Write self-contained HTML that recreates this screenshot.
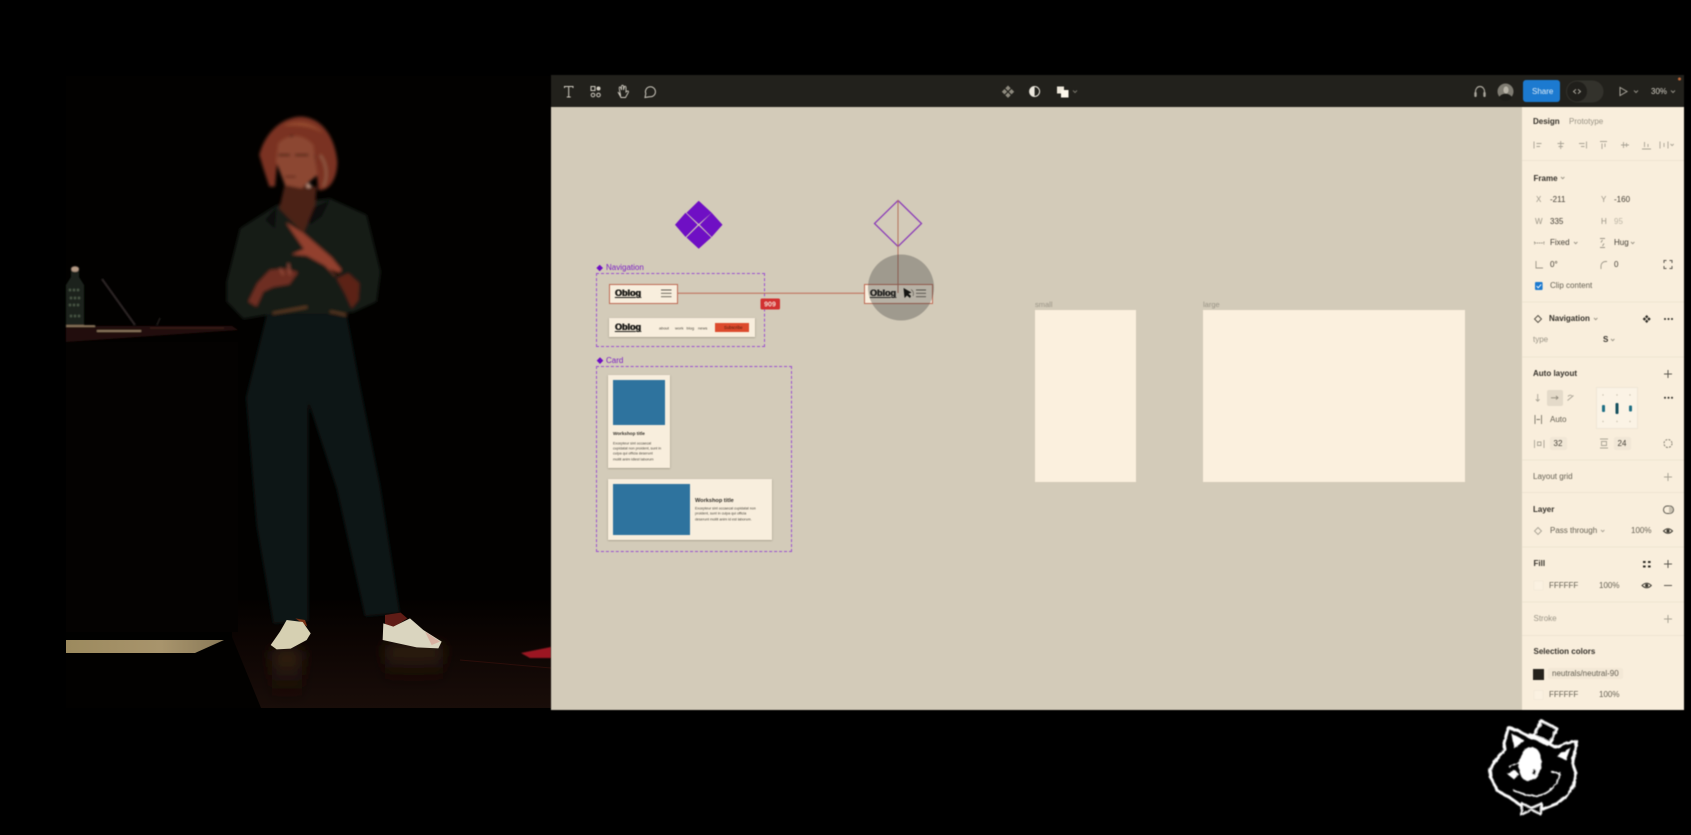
<!DOCTYPE html>
<html><head><meta charset="utf-8"><title>Figma talk</title>
<style>
html,body{margin:0;padding:0;background:#000;width:1691px;height:835px;overflow:hidden;font-family:"Liberation Sans",sans-serif}
.a{position:absolute}
.t{position:absolute;white-space:nowrap;transform:translateY(-50%);font-size:8px;line-height:10px;color:#443f36}
.b{font-weight:700;color:#35312a}
.d{color:#9a9486}
.m{color:#666154}
.o{font-weight:700;font-size:9px;color:#1b1a17;text-decoration:underline;text-shadow:.35px 0 0 #1b1a17,-.2px 0 0 #1b1a17}
.k{background:#f8eedd;position:absolute;box-shadow:0 .5px 1.5px rgba(60,50,30,.45)}
.i{background:#2e739e;position:absolute}
.l{font-size:3.6px;line-height:5px;color:#4a463c}
#w{position:absolute;left:0;top:0;width:1691px;height:835px;filter:blur(.65px)}
</style></head><body>
<!-- stage photo -->
<svg class="a" style="left:0;top:0" width="1691" height="835" viewBox="0 0 1691 835">
<defs>
<filter id="f1" filterUnits="userSpaceOnUse" x="0" y="0" width="1691" height="835"><feGaussianBlur stdDeviation="1.6"/></filter>
<filter id="f0" filterUnits="userSpaceOnUse" x="0" y="0" width="1691" height="835"><feGaussianBlur stdDeviation=".8"/></filter>
<filter id="f2" filterUnits="userSpaceOnUse" x="0" y="0" width="1691" height="835"><feGaussianBlur stdDeviation="7"/></filter>
<linearGradient id="fl" x1="0" y1="0" x2="0" y2="1"><stop offset="0" stop-color="#030100"/><stop offset=".4" stop-color="#0d0503"/><stop offset="1" stop-color="#190d09"/></linearGradient>
<linearGradient id="st" x1="0" y1="0" x2="1" y2="0"><stop offset="0" stop-color="#9c8a5e"/><stop offset=".6" stop-color="#a8946c"/><stop offset="1" stop-color="#8a7a58"/></linearGradient>
<linearGradient id="r1" x1="0" y1="0" x2="0" y2="1"><stop offset="0" stop-color="#3c2818"/><stop offset="1" stop-color="#170c08" stop-opacity="0"/></linearGradient>
</defs>
<rect x="66" y="76" width="485" height="632" fill="#020100"/>
<rect x="66" y="600" width="485" height="108" fill="url(#fl)"/>
<g filter="url(#f2)">
<rect x="272" y="650" width="30" height="54" fill="url(#r1)"/>
<rect x="385" y="645" width="58" height="40" fill="url(#r1)"/>
</g>
<path d="M460 660L551 668" stroke="#2c0e0a" stroke-width="1"/>
<g filter="url(#f0)"><path d="M521 653L551 647V658H530Z" fill="#9c1424"/></g>
<!-- table -->
<rect x="66" y="342" width="172" height="290" fill="#040201"/>
<g filter="url(#f0)">
<path d="M66 326H232L238 330 66 342Z" fill="#23100a"/>
<path d="M66 326H95M97 331H141" stroke="#a0886a" stroke-width="1.5"/>
<path d="M150 328H224" stroke="#3a1e14" stroke-width="1.2"/>
<path d="M71 270h8v7l5 8v40H66v-40l5-8z" fill="#1a241d"/>
<ellipse cx="75" cy="269" rx="4" ry="2.8" fill="#b59a84"/>
<path d="M69 290h12M70 298h11M69 305h12M70 316h11" stroke="#4d5a48" stroke-width="2.2" stroke-dasharray="2 2"/>
<path d="M102 279L135 325" stroke="#2e2628" stroke-width="2"/>
<path d="M157 325L160 318" stroke="#2a2422" stroke-width="1.2"/>
</g>
<path d="M66 632H230L261 708H66Z" fill="#020100"/>
<rect x="66" y="632" width="166" height="8" fill="#010100"/>
<path d="M66 640H224L195 653H66Z" fill="url(#st)"/>

<!-- person -->
<g filter="url(#f1)">
<g transform="translate(60,70) scale(.33333,.41459)">
<path d="M620 590H860L900 760 960 1000 1020 1310 915 1318 830 1010 745 800 745 1330 640 1335 590 1100 558 790Z" fill="#0d1412"/>
</g>
<g transform="translate(220,105) scale(.33333)">
<path d="M170 300L330 280 440 330 482 500 470 590 400 622 330 628 150 628 70 642 20 590 20 530 60 370Z" fill="#131b19"/>
<path d="M135 345L170 305 165 372ZM255 320L330 285 305 335 270 360Z" fill="#080d0c"/>
<path d="M195 235L290 245 285 300 250 385 178 310Z" fill="#4c2216"/>
<path d="M118 150C135 80 190 35 245 35 310 40 345 100 352 170 352 225 325 260 295 255L285 150 215 90 175 130 165 245 148 245 130 190Z" fill="#7a3320"/>
<path d="M190 62C230 42 280 50 310 85 270 60 230 62 190 62Z" fill="#94482f"/>
<path d="M300 150C320 175 325 215 310 245" stroke="#8e5640" stroke-width="8" fill="none"/>
<path d="M175 115C205 85 250 85 280 120L292 210 245 250 195 240 168 170Z" fill="#8c4733"/>
<path d="M175 150h35M225 150h40" stroke="#3e1a12" stroke-width="5"/>
<path d="M195 215h32" stroke="#4e1e15" stroke-width="4"/>
<circle cx="266" cy="242" r="6" fill="#d8a690"/>
<path d="M350 520L385 505 418 535 415 585 395 610 375 565Z" fill="#5c2418"/>
<path d="M198 352L250 384 335 458 365 495 345 515 315 482 260 452 215 448 252 432 222 388Z" fill="#92402f"/>
<path d="M328 492L368 505 350 518Z" fill="#23150d"/>
<path d="M85 590L112 535 150 495 200 490 234 502 208 538 160 546 130 560 110 605Z" fill="#6e2d22"/>
<path d="M180 490L190 510M205 475L210 510" stroke="#9a4e3e" stroke-width="5"/>
<path d="M158 625L262 606M330 620L380 630" stroke="#704428" stroke-width="5"/>
</g>
<g transform="translate(60,70) scale(.33333,.41459)">
<path d="M712 600V730" stroke="#33160f" stroke-width="3" stroke-dasharray="5 30"/>
</g>
</g>
<!-- shoes -->
<g filter="url(#f0)" transform="translate(60,590) scale(.33333)">
<path d="M975 75L1022 68 1042 85 1000 112 975 105Z" fill="#5e1c12"/>
<path d="M706 85L735 90 742 110Z" fill="#7a3214"/>
<path d="M680 90L728 96 752 130 740 150 692 176 650 178 632 165 660 125Z" fill="#d6d0b2"/>
<path d="M970 100L1000 110 1050 85 1090 120 1145 155 1135 175 1070 172 968 150Z" fill="#dad5bf"/>
<path d="M1095 125L1140 155 1115 165Z" fill="#d8b0a0"/>
</g>
</svg>

<div id="w">
<div class="a" style="left:551px;top:75px;width:1133px;height:32px;background:#22211c"></div>
<div class="a" style="left:551px;top:107px;width:971px;height:603px;background:#d3cbb9"></div>
<div class="a" style="left:1522px;top:107px;width:162px;height:603px;background:#f9eedc"></div>

<div class="a" style="left:1034.5px;top:310px;width:101px;height:172px;background:#fbf0de"></div>
<div class="a" style="left:1202.5px;top:310px;width:262px;height:172px;background:#fbf0de"></div>
<div class="t d" style="left:1035px;top:305px;font-size:7.5px">small</div>
<div class="t d" style="left:1203px;top:305px;font-size:7.5px">large</div>

<div class="a" style="left:595.5px;top:273px;width:169px;height:74px;border:1px dashed #9a50cf;box-sizing:border-box"></div>
<div class="a" style="left:595.5px;top:366px;width:196.5px;height:186px;border:1px dashed #9a50cf;box-sizing:border-box"></div>
<div class="t" style="left:606px;top:268px;color:#7a1fc4;font-size:8px">Navigation</div>
<div class="t" style="left:606px;top:360.5px;color:#7a1fc4;font-size:8px">Card</div>

<div class="k" style="left:608.5px;top:283.5px;width:69px;height:20px;box-shadow:none;border:1px solid #bd6a55;box-sizing:border-box"></div>
<div class="k" style="left:609px;top:318px;width:146px;height:19px"></div>
<div class="k" style="left:863.5px;top:283.5px;width:69px;height:20px;box-shadow:none;border:1px solid #bd6a55;box-sizing:border-box"></div>
<div class="t o" style="left:615px;top:293px">Oblog</div>
<div class="t o" style="left:615px;top:327px">Oblog</div>
<div class="t o" style="left:870px;top:293px">Oblog</div>
<div class="t l" style="left:659px;top:327.5px;font-size:4px">about</div>
<div class="t l" style="left:675px;top:327.5px;font-size:4px">work</div>
<div class="t l" style="left:686.5px;top:327.5px;font-size:4px">blog</div>
<div class="t l" style="left:698px;top:327.5px;font-size:4px">news</div>
<div class="a" style="left:714.5px;top:322.7px;width:34.5px;height:9.5px;background:#dc4a2c"></div>
<div class="t" style="left:724px;top:327.5px;font-size:4.2px;color:#4d1a0c">Subscribe</div>

<div class="k" style="left:608px;top:375px;width:62px;height:93px"></div>
<div class="i" style="left:613px;top:380px;width:52px;height:45px"></div>
<div class="t b" style="left:613px;top:433.5px;font-size:4.6px">Workshop title</div>
<div class="t l" style="left:613px;top:443.5px">Excepteur sint occaecat</div>
<div class="t l" style="left:613px;top:449px">cupidatat non proident, sunt in</div>
<div class="t l" style="left:613px;top:454px">culpa qui officia deserunt</div>
<div class="t l" style="left:613px;top:459.5px">mollit anim idlest laborum</div>
<div class="k" style="left:608px;top:479px;width:164px;height:61px"></div>
<div class="i" style="left:613px;top:484px;width:77px;height:51px"></div>
<div class="t b" style="left:695px;top:500.5px;font-size:5.6px">Workshop title</div>
<div class="t l" style="left:695px;top:509px">Excepteur sint occaecat cupidatat non</div>
<div class="t l" style="left:695px;top:514px">proident, sunt in culpa qui officia</div>
<div class="t l" style="left:695px;top:519.5px">deserunt mollit anim id est laborum.</div>

<div class="t b" style="left:1533px;top:121.5px">Design</div>
<div class="t d" style="left:1569px;top:121.5px">Prototype</div>
<div class="t b" style="left:1533.5px;top:178.5px">Frame</div>
<div class="t d" style="left:1536px;top:199.5px">X</div><div class="t" style="left:1550px;top:199.5px">-211</div>
<div class="t d" style="left:1601px;top:199.5px">Y</div><div class="t" style="left:1614px;top:199.5px">-160</div>
<div class="t d" style="left:1535px;top:221.5px">W</div><div class="t" style="left:1550px;top:221.5px">335</div>
<div class="t d" style="left:1601px;top:221.5px">H</div><div class="t" style="left:1614px;top:221.5px;color:#bdb6a6">95</div>
<div class="t" style="left:1550px;top:243px">Fixed</div>
<div class="t" style="left:1614px;top:243px">Hug</div>
<div class="t" style="left:1550px;top:264.5px">0°</div>
<div class="t" style="left:1614px;top:264.5px">0</div>
<div class="t m" style="left:1550px;top:286px">Clip content</div>
<div class="t b" style="left:1549px;top:319px">Navigation</div>
<div class="t d" style="left:1533px;top:340px">type</div>
<div class="t b" style="left:1603px;top:340px">S</div>
<div class="t b" style="left:1533px;top:373.5px">Auto layout</div>
<div class="t m" style="left:1550px;top:419.5px">Auto</div>
<div class="a" style="left:1546.5px;top:390px;width:16px;height:16px;background:#e4dac9;border-radius:2px"></div>
<div class="a" style="left:1596px;top:387px;width:42px;height:42px;background:#fbf3e5;border:1px solid #efe6d6;box-sizing:border-box"></div>
<div class="a" style="left:1550px;top:437px;width:17px;height:13px;background:#f1e7d6;border-radius:2px"></div>
<div class="a" style="left:1614px;top:437px;width:17px;height:13px;background:#f1e7d6;border-radius:2px"></div>
<div class="t" style="left:1553.5px;top:443.5px">32</div>
<div class="t" style="left:1617.5px;top:443.5px">24</div>
<div class="t m" style="left:1533px;top:477px">Layout grid</div>
<div class="t b" style="left:1533px;top:509.5px">Layer</div>
<div class="t m" style="left:1550px;top:531px">Pass through</div>
<div class="t m" style="left:1631px;top:531px">100%</div>
<div class="t b" style="left:1533.5px;top:564px">Fill</div>
<div class="t m" style="left:1549px;top:585.5px">FFFFFF</div>
<div class="t m" style="left:1599px;top:585.5px">100%</div>
<div class="t d" style="left:1533.5px;top:619px">Stroke</div>
<div class="t b" style="left:1533.5px;top:652px">Selection colors</div>
<div class="a" style="left:1532.5px;top:668.5px;width:11px;height:11px;background:#25221c"></div>
<div class="a" style="left:1548px;top:668px;width:75px;height:11px;background:#f3e8d6;border-radius:2px"></div>
<div class="t m" style="left:1552px;top:673.5px">neutrals/neutral-90</div>
<div class="t m" style="left:1549px;top:695px">FFFFFF</div>
<div class="t m" style="left:1599px;top:695px">100%</div>

<div class="a" style="left:1523px;top:80px;width:37px;height:22px;background:#1c7ad0;border-radius:3px"></div>
<div class="t" style="left:1532px;top:91.5px;color:#dcebf7;font-size:8px">Share</div>
<div class="t" style="left:1651px;top:91.5px;color:#d5d1c6;font-size:8px">30%</div>

<svg class="a" style="left:0;top:0" width="1691" height="835" viewBox="0 0 1691 835" fill="none">
<g stroke="#cfcbc0" stroke-width="1">
<path d="M564.5 88V86.5H573V88M568.7 86.5V97M566.8 97H570.7"/>
<rect x="591" y="86.5" width="4" height="4"/><circle cx="598.5" cy="88.5" r="1.5" fill="#cfcbc0"/>
<circle cx="593" cy="95" r="1.8"/><circle cx="598.5" cy="95" r="1.8"/>
<path d="M618 92L620.5 95C620 91 618.5 88 619.5 87 620.5 86.5 621 88 621.5 90V86C622 85 623 85 623.5 86V90L624.5 86.5C625 86 626 86 626 87.5V92C628 90 629 91 628 93L625.5 97.5H621Z" stroke-width=".9"/>
<path d="M649.5 96.7L645 97.5 645.8 93.7A5 5 0 1 1 649.5 96.7Z"/>
</g>
<g fill="#8d8a7e">
<path d="M1008 85.5l2.7 2.7-2.7 2.7-2.7-2.7zM1008 92.5l2.7 2.7-2.7 2.7-2.7-2.7zM1004.5 89l2.7 2.7-2.7 2.7-2.7-2.7zM1011.5 89l2.7 2.7-2.7 2.7-2.7-2.7z"/>
</g>
<circle cx="1034.6" cy="91.5" r="5" fill="#22211c" stroke="#e9e5da" stroke-width="1"/>
<path d="M1034.6 86.5A5 5 0 0 0 1034.6 96.5Z" fill="#ece8de"/>
<rect x="1057" y="86.5" width="7" height="7" fill="#efe9db"/><rect x="1061" y="90" width="7.5" height="7.5" fill="#fdf8ec"/>
<path d="M1073 90.5l2 2 2-2" stroke="#77746a" stroke-width="1"/>
<path d="M1475.5 95V91.5A4.5 5 0 0 1 1484.5 91.5V95" stroke="#a9a59b" stroke-width="1.2"/>
<rect x="1474.3" y="92" width="2.4" height="5" rx="1" fill="#a9a59b"/><rect x="1483.3" y="92" width="2.4" height="5" rx="1" fill="#a9a59b"/>
<circle cx="1505.5" cy="91.5" r="8" fill="#7f7c72"/>
<path d="M1499 97.5A7 6 0 0 1 1512 97.5 8 8 0 0 1 1499 97.5Z" fill="#1c1c18"/>
<ellipse cx="1506" cy="90" rx="2.6" ry="3.6" fill="#b8b4a8"/>
<rect x="1566" y="80.5" width="37.5" height="22" rx="11" fill="#33322c"/>
<circle cx="1577" cy="91.5" r="10" fill="#201f1b"/>
<path d="M1576 89.3l-2.5 2.2 2.5 2.2M1578 89.3l2.5 2.2-2.5 2.2" stroke="#b6b2a7" stroke-width=".9"/>
<path d="M1620 87.5V95.5L1627 91.5Z" stroke="#a9a59b" stroke-width="1"/>
<path d="M1634 90.5l2 2 2-2M1671 90.5l2 2 2-2" stroke="#8f8c82" stroke-width="1"/>
<circle cx="1679.5" cy="79" r="1.5" fill="#c26a3a"/>

<g fill="#6f0fc4">
<path d="M698.7 200.7L711.7 212.7 698.7 224 686.5 212.7Z"/>
<path d="M685.5 212.7L697.7 224.8 685.5 237 675 224.8Z"/>
<path d="M711.7 212.7L722.5 224.8 711.7 237 699.7 224.8Z"/>
<path d="M698.7 225.5L711.2 237.5 698.7 248.7 686.5 237.5Z"/>
</g>
<path d="M898 200.5L921.5 223.5 898 246.5 874.5 223.5Z" stroke="#8a3bb8" stroke-width="1.3"/>

<path d="M677.5 293.3H864" stroke="#bd6a55" stroke-width="1"/>
<path d="M898 200V293" stroke="#b5705c" stroke-width="1"/>

<path d="M661 290H671.5M661 293.3H671.5M661 296.7H671.5" stroke="#5c584f" stroke-width=".9"/>
<path d="M916 290H926M916 293.3H926M916 296.7H926" stroke="#5c584f" stroke-width=".9"/>

<circle cx="901" cy="287.5" r="33" fill="#3c3c3a" fill-opacity=".34"/>
<path d="M903.5 288L904.5 298 907 295.5 910 298 911 296 908.5 293.8 911.5 292.5Z" fill="#151512"/>
<path d="M911 289.5A5 5 0 0 1 913 296" stroke="#6a675e" stroke-width=".8"/>

<path d="M599.7 264.8L603 268 599.7 271.2 596.4 268Z" fill="#6f0fc4"/>
<path d="M600 357.3L603.3 360.6 600 364 596.7 360.6Z" fill="#6f0fc4"/>

<rect x="760.5" y="298.5" width="19.5" height="11" rx="1.5" fill="#d23030"/>

<g stroke="#efe4d1" stroke-width="1">
<path d="M1522 160.5H1684M1522 302H1684M1522 357H1684M1522 460H1684M1522 492.5H1684M1522 547H1684M1522 602H1684M1522 635.5H1684"/>
</g>
<g stroke="#a8a294" stroke-width=".9">
<path d="M1534 141.5V148.5M1536.5 143.5H1541.5M1536.5 146.5H1540"/>
<path d="M1560.7 141V149M1557.5 143.5H1564M1558.5 146.5H1563"/>
<path d="M1586.5 141.5V148.5M1579 143.5H1584.5M1581 146.5H1584.5"/>
<path d="M1600 141.5H1607M1602 143.5V149M1605 143.5V147"/>
<path d="M1621 145H1629M1623.5 142V148M1626.5 143V147"/>
<path d="M1642 149H1651M1644.5 142V147M1648 144V147"/>
<path d="M1660 141.5V148.5M1668 141.5V148.5M1664 143V147M1670.5 144l1.6 1.6 1.6-1.6"/>
</g>
<g stroke="#9a9486" stroke-width=".9">
<path d="M1561 177l1.7 1.7 1.7-1.7"/>
<path d="M1534.5 243H1544M1534.5 241.5V244.5M1544 241.5V244.5" stroke-dasharray="1.5 .7"/>
<path d="M1600 238.5H1605M1600 247.5H1605M1602.5 240L1601 242.5M1602.5 246L1604 243.5"/>
<path d="M1536 261V268H1543"/>
<path d="M1601 269V266A4.5 4.5 0 0 1 1605.5 261.5H1607"/>
<path d="M1574 242l1.7 1.7 1.7-1.7M1631 242l1.7 1.7 1.7-1.7"/>
<path d="M1594 318l1.7 1.7 1.7-1.7M1611 339l1.7 1.7 1.7-1.7"/>
</g>
<path d="M1664 263V260.5H1666.5M1669.5 260.5H1672V263M1672 266V268.5H1669.5M1666.5 268.5H1664V266" stroke="#5c584f" stroke-width="1"/>
<rect x="1535" y="282" width="7.6" height="8" rx="1" fill="#1c7ad0"/>
<path d="M1536.6 286l1.6 1.8 3-3.4" stroke="#fff" stroke-width=".9"/>
<path d="M1538 315.5L1541.5 319 1538 322.5 1534.5 319Z" stroke="#4d483e" stroke-width=".9"/>
<g fill="#2c2a24">
<path d="M1646.7 315l1.7 1.7-1.7 1.7-1.7-1.7zM1646.7 319.6l1.7 1.7-1.7 1.7-1.7-1.7zM1644.4 317.3l1.7 1.7-1.7 1.7-1.7-1.7zM1649 317.3l1.7 1.7-1.7 1.7-1.7-1.7z"/>
<circle cx="1665" cy="319" r="1"/><circle cx="1668.5" cy="319" r="1"/><circle cx="1672" cy="319" r="1"/>
<circle cx="1665" cy="397.7" r="1"/><circle cx="1668.5" cy="397.7" r="1"/><circle cx="1672" cy="397.7" r="1"/>
</g>
<g stroke="#5c584f" stroke-width="1">
<path d="M1668 370V378M1664 374H1672"/>
</g>
<g stroke="#a8a294" stroke-width="1">
<path d="M1668 473V481M1664 477H1672M1668 615V623M1664 619H1672"/>
</g>
<g stroke="#5c584f" stroke-width="1">
<path d="M1668 560V568M1664 564H1672M1664 585.5H1672"/>
</g>
<g stroke="#a8a294" stroke-width=".9">
<path d="M1537.7 394V401M1535.8 399.3L1537.7 401.2 1539.6 399.3"/>
<path d="M1551 397.8H1558M1556 396L1558 397.8 1556 399.6" stroke="#8f897b"/>
<path d="M1567.5 400.5L1573.5 395.5M1568 396.5A2.5 2.5 0 0 1 1572 396"/>
<path d="M1535 415V424M1541.5 415V424M1536.5 419.5H1540" stroke="#7c7769"/>
<path d="M1534.5 440V448M1544 440V448M1537.5 442h3.5v3.5h-3.5z"/>
<path d="M1600 439H1608M1600 448H1608M1601.5 441.5h5v4h-5z"/>
<circle cx="1668" cy="443.5" r="4" stroke-dasharray="2 1.2" stroke="#7c7769"/>
</g>
<g fill="#c8bfae">
<circle cx="1603" cy="395" r=".7"/><circle cx="1617" cy="395" r=".7"/><circle cx="1630" cy="395" r=".7"/>
<circle cx="1603" cy="421.5" r=".7"/><circle cx="1617" cy="421.5" r=".7"/><circle cx="1630" cy="421.5" r=".7"/>
</g>
<rect x="1602" y="405" width="3" height="7" rx="1" fill="#1f6f85"/>
<rect x="1615.5" y="403" width="3" height="11" rx="1" fill="#14505f"/>
<rect x="1629" y="405.5" width="3" height="6" rx="1" fill="#1f6f85"/>
<rect x="1663.5" y="506" width="10" height="7.5" rx="3.7" stroke="#5c584f" stroke-width="1"/>
<path d="M1669 506A3.7 3.7 0 0 1 1669 513.5Z" fill="#c9c1b0"/>
<path d="M1538 527.5L1541.5 531 1538 534.5 1534.5 531Z" stroke="#a8a294" stroke-width=".9"/>
<path d="M1601 530l1.7 1.7 1.7-1.7" stroke="#a8a294" stroke-width=".9"/>
<path d="M1663.5 531Q1668 526.5 1672.5 531 1668 535.5 1663.5 531Z" stroke="#3a372f" stroke-width="1"/><circle cx="1668" cy="531" r="1.6" fill="#3a372f"/>
<path d="M1642 585.5Q1646.7 581 1651.3 585.5 1646.7 590 1642 585.5Z" stroke="#3a372f" stroke-width="1"/><circle cx="1646.7" cy="585.5" r="1.6" fill="#3a372f"/>
<g fill="#2c2a24"><rect x="1643" y="561" width="2.6" height="2"/><rect x="1648" y="561" width="2.6" height="2"/><rect x="1643" y="565.5" width="2.6" height="2"/><rect x="1648" y="565.5" width="2.6" height="2"/></g>
<rect x="1534" y="581" width="9" height="9" fill="#fbf1e1" stroke="#f1e7d6" stroke-width=".6"/>
<rect x="1534" y="690.5" width="9" height="9" fill="#fbf1e1" stroke="#f1e7d6" stroke-width=".6"/>
<text x="770" y="306.5" text-anchor="middle" font-family="Liberation Sans,sans-serif" font-size="7" font-weight="700" fill="#f4d8cf">909</text>
</svg>
</div>

<!-- mascot -->
<svg class="a" style="left:1440px;top:540px" width="251" height="295" viewBox="0 0 753 885" fill="none" stroke-linejoin="round" stroke-linecap="round">
<defs><filter id="rg" x="-10%" y="-10%" width="120%" height="120%"><feTurbulence type="fractalNoise" baseFrequency=".06" numOctaves="2" seed="4"/><feDisplacementMap in="SourceGraphic" scale="8"/><feGaussianBlur stdDeviation="2"/></filter></defs>
<g filter="url(#rg)">
<g stroke="#fff" stroke-width="9">
<path d="M303 541L352 566 330 609 280 586Z" fill="#000" stroke-width="7"/>
<path d="M270 585L322 612" stroke-width="11"/>
<path d="M205 563L232 570 270 592 310 600 345 622 378 610 410 604 403 640 398 672 408 700 402 735 384 764 352 790 312 806 296 806 248 800 208 772 172 752 152 712 150 690 170 655 195 628 192 610Z"/>
<path d="M222 752Q305 790 345 735 360 715 360 698" stroke-width="5"/>
<path d="M335 695Q350 695 362 706" stroke-width="5"/>
<path d="M245 790L275 803 305 790 303 825 275 810 243 825Z" fill="#000" stroke-width="6"/>
</g>
<g fill="#fff">
<path d="M214 580L254 602 222 625Z"/>
<path d="M350 648L392 622 378 660Z"/>
<ellipse cx="270" cy="672" rx="34" ry="52" transform="rotate(8 270 672)"/>
<path d="M200 700L225 690 237 703 222 718Z"/>
</g>
<ellipse cx="282" cy="696" rx="5" ry="9" fill="#000"/>
<path d="M208 680L236 668" stroke="#fff" stroke-width="4"/>
</g>
</svg>
</body></html>
